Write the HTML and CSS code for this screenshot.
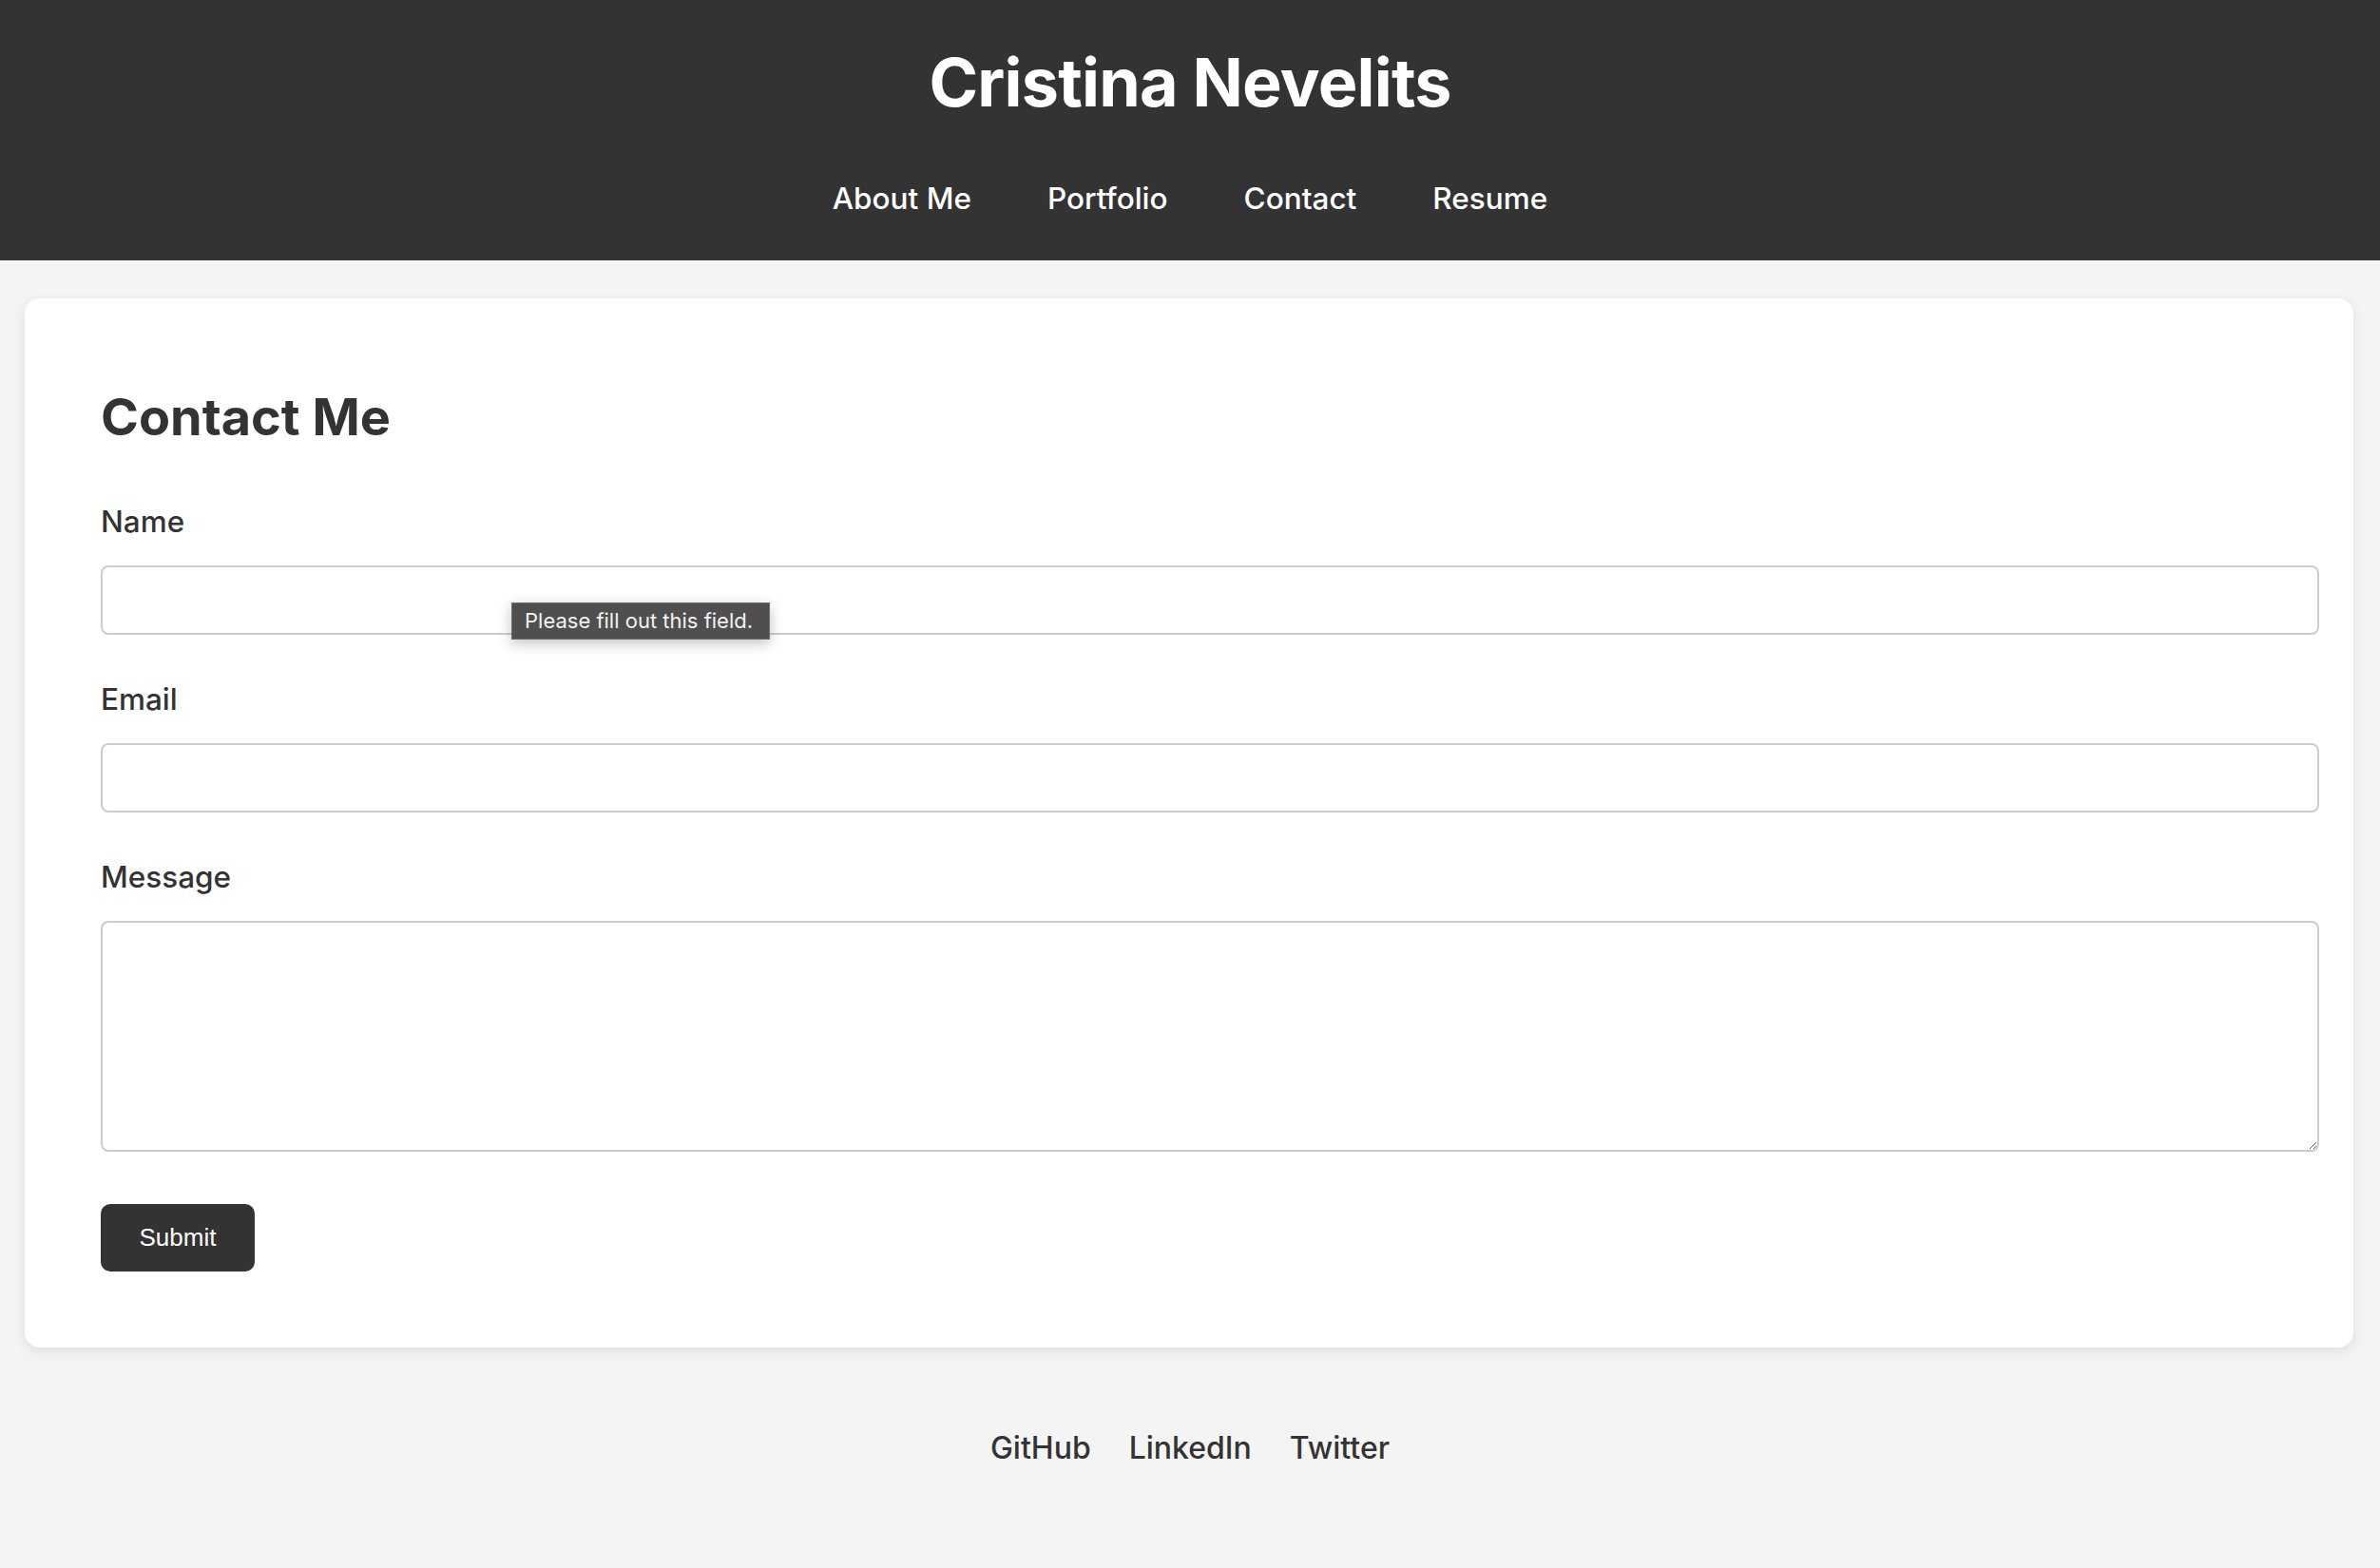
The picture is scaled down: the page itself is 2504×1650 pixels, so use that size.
FILE: index.html
```html
<!DOCTYPE html>
<html lang="en">
<head>
<meta charset="utf-8">
<title>Cristina Nevelits - Contact</title>
<link rel="stylesheet" href="styles.css">
</head>
<body>
<header class="site-header">
  <h1 class="site-title">Cristina Nevelits</h1>
  <nav class="site-nav">
    <a href="#">About Me</a>
    <a href="#">Portfolio</a>
    <a href="#">Contact</a>
    <a href="#">Resume</a>
  </nav>
</header>
<main class="page">
  <section class="card">
    <h2 class="card-title">Contact Me</h2>
    <form class="contact-form">
      <div class="field">
        <label for="name">Name</label>
        <div class="control">
          <input id="name" type="text">
          <div class="bubble">Please fill out this field.</div>
        </div>
      </div>
      <div class="field">
        <label for="email">Email</label>
        <div class="control">
          <input id="email" type="email">
        </div>
      </div>
      <div class="field">
        <label for="message">Message</label>
        <div class="control">
          <textarea id="message"></textarea>
        </div>
      </div>
      <button type="button" class="submit">Submit</button>
    </form>
  </section>
</main>
<footer class="site-footer">
  <a href="#">GitHub</a>
  <a href="#">LinkedIn</a>
  <a href="#">Twitter</a>
</footer>
</body>
</html>
```
FILE: styles.css
```css
* { box-sizing: border-box; }
html, body { margin: 0; padding: 0; }
body {
  background: #f4f4f4;
  color: #333;
  font-family: Inter, "Noto Sans", sans-serif;
}
a { text-decoration: none; }

.site-header {
  background: #333;
  color: #fff;
  height: 274px;
  padding-top: 45px;
  text-align: center;
}
.site-title {
  margin: 0;
  font-size: 70px;
  font-weight: 700;
  line-height: 84px;
  letter-spacing: -0.8px;
}
.site-nav {
  margin-top: 62px;
  display: flex;
  justify-content: center;
  gap: 80px;
}
.site-nav a {
  color: #fff;
  font-size: 31.5px;
  font-weight: 500;
  line-height: 36px;
}

.page {
  padding: 40px 28px 0 26px;
}
.card {
  background: #fff;
  border-radius: 16px;
  box-shadow: 0 4px 14px rgba(0, 0, 0, 0.09);
  padding: 80px;
  padding-top: 92px;
}
.card-title {
  margin: 0;
  font-size: 54px;
  font-weight: 700;
  line-height: 65px;
}
.contact-form {
  margin-top: 60px;
  display: flex;
  flex-direction: column;
  align-items: flex-start;
}
.field {
  width: 100%;
  margin-bottom: 50px;
}
.field:last-of-type { margin-bottom: 55px; }
.field label {
  display: block;
  font-size: 31.5px;
  font-weight: 500;
  line-height: 36px;
  margin-bottom: 28px;
}
.control { position: relative; }
.control input,
.control textarea {
  display: block;
  box-sizing: content-box;
  width: 100%;
  padding: 0 20px;
  border: 2px solid #ccc;
  border-radius: 8px;
  background: #fff;
  font-family: Inter, sans-serif;
  font-size: 28px;
  color: #333;
  margin: 0;
}
.control input { height: 69px; }
.control textarea {
  height: 219px;
  padding-top: 10px;
  padding-bottom: 10px;
  resize: vertical;
}
.bubble {
  position: absolute;
  left: 432px;
  top: 39px;
  width: 272px;
  height: 39px;
  background: #4f4f4f;
  border: 1px solid #6b6b6b;
  color: #f2f2f2;
  font-family: Inter, sans-serif;
  font-size: 22px;
  line-height: 37px;
  padding-left: 13px;
  box-shadow: 0 4px 14px rgba(0, 0, 0, 0.25);
  white-space: nowrap;
}
.submit {
  width: 162px;
  height: 71px;
  background: #333;
  color: #fff;
  border: none;
  border-radius: 10px;
  font-family: "Liberation Sans", Arial, sans-serif;
  font-size: 26px;
  padding: 0;
}

.site-footer {
  display: flex;
  justify-content: center;
  gap: 40px;
  padding-top: 88px;
  padding-bottom: 90px;
}
.site-footer a {
  color: #333;
  font-size: 32px;
  font-weight: 500;
  line-height: 36px;
}
```
